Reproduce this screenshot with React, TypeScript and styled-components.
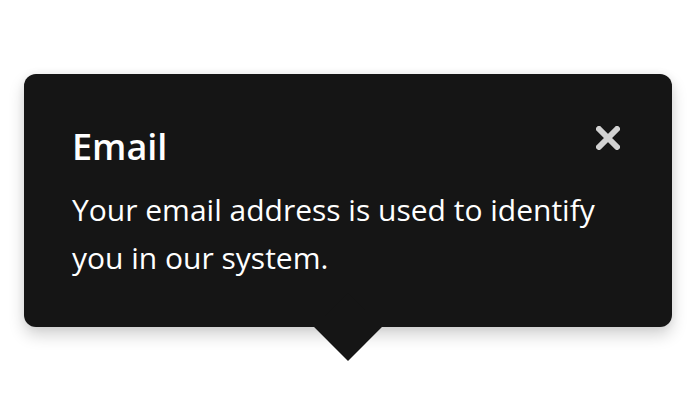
import React from "react";
import styled, { createGlobalStyle } from "styled-components";

const Global = createGlobalStyle`
  html, body { margin: 0; padding: 0; background: #ffffff; }
  body { font-family: "Open Sans", "Liberation Sans", sans-serif; }
`;

const Page = styled.div`
  padding: 74px 24px 60px 24px;
`;

const Popover = styled.div`
  position: relative;
  width: 648px;
  box-sizing: border-box;
  min-height: 253px;
  background: #151515;
  border-radius: 12px;
  padding: 51px 48px 44px 48px;
  box-shadow: 0 8px 16px rgba(3, 3, 3, 0.18), 0 0 8px rgba(3, 3, 3, 0.06);
  color: #ffffff;
  &::after {
    content: "";
    position: absolute;
    left: 300px;
    bottom: -24px;
    width: 48px;
    height: 48px;
    background: #151515;
    transform: rotate(45deg);
  }
`;

const Header = styled.div`
  display: flex;
  align-items: flex-start;
  justify-content: space-between;
`;

const Title = styled.h1`
  margin: 0;
  font-size: 36px;
  font-weight: 600;
  line-height: 44px;
  color: #ffffff;
`;

const Close = styled.button`
  border: 0;
  background: transparent;
  padding: 0;
  margin: 1px 4px 0 0;
  width: 24px;
  height: 24px;
  display: flex;
  cursor: pointer;
`;

const Body = styled.p`
  margin: 17px 0 0 0;
  font-size: 30px;
  line-height: 48px;
  font-weight: 400;
  color: #ffffff;
`;

export default function App() {
  return (
    <>
      <Global />
      <Page>
        <Popover>
          <Header>
            <Title>Email</Title>
            <Close aria-label="Close">
              <svg width="24" height="24" viewBox="0 0 24 24">
                <path d="M3 3 L21 21 M21 3 L3 21" stroke="#d2d2d2" strokeWidth="6" strokeLinecap="round" fill="none" />
              </svg>
            </Close>
          </Header>
          <Body>Your email address is used to identify you in our system.</Body>
        </Popover>
      </Page>
    </>
  );
}
